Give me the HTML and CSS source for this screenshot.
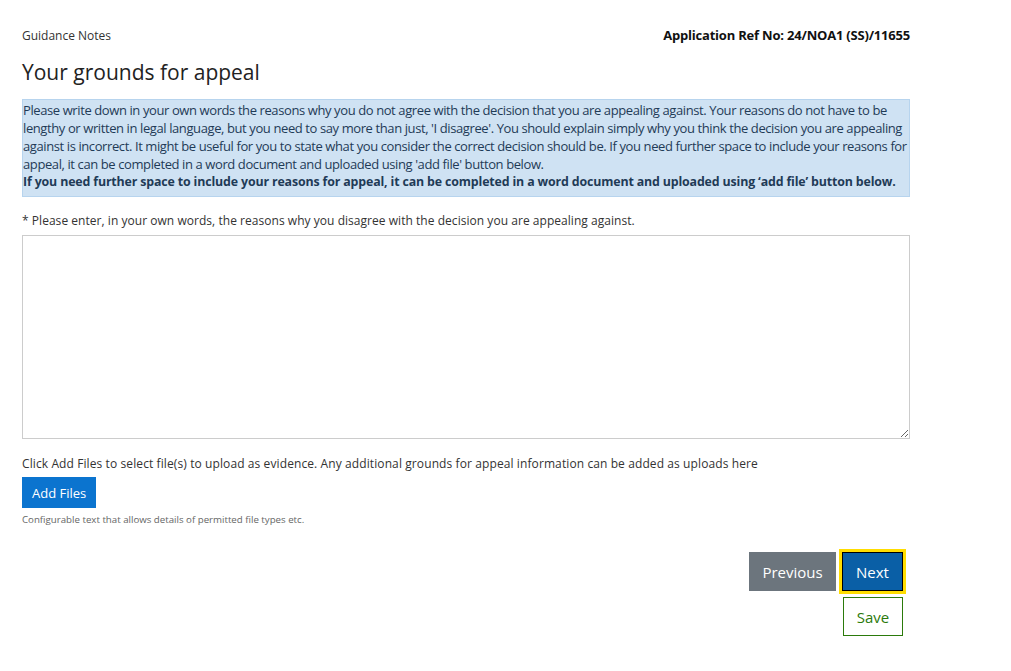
FILE: index.html
```html
<!DOCTYPE html>
<html lang="en">
<head>
  <meta charset="UTF-8">
  <meta name="viewport" content="width=device-width, initial-scale=1.0">
  <title>Your grounds for appeal</title>
  <link rel="stylesheet" href="styles.css">
</head>
<body>

  <div class="page">

    <!-- Top row -->
    <div class="top-row">
      <a href="#" class="guidance">Guidance Notes</a>
      <span class="app-ref">Application Ref No: 24/NOA1 (SS)/11655</span>
    </div>

    <h1>Your grounds for appeal</h1>

    <!-- Info box -->
    <div class="info-box">
      <p>Please write down in your own words the reasons why you do not agree with the decision that you are appealing against. Your reasons do not have to be lengthy or written in legal language, but you need to say more than just, 'I disagree'. You should explain simply why you think the decision you are appealing against is incorrect. It might be useful for you to state what you consider the correct decision should be. If you need further space to include your reasons for appeal, it can be completed in a word document and uploaded using 'add file' button below.</p>
      <p class="strong">If you need further space to include your reasons for appeal, it can be completed in a word document and uploaded using ‘add file’ button below.</p>
    </div>

    <!-- Grounds -->
    <label class="field-label" for="grounds">* Please enter, in your own words, the reasons why you disagree with the decision you are appealing against.</label>
    <textarea id="grounds" class="grounds"></textarea>

    <!-- Uploads -->
    <p class="upload-text">Click Add Files to select file(s) to upload as evidence. Any additional grounds for appeal information can be added as uploads here</p>
    <button class="btn btn-add">Add Files</button>
    <p class="hint">Configurable text that allows details of permitted file types etc.</p>

    <!-- Navigation -->
    <div class="nav-buttons">
      <div class="nav-row">
        <button class="btn btn-prev">Previous</button>
        <button class="btn btn-next">Next</button>
      </div>
      <button class="btn btn-save">Save</button>
    </div>

  </div>

</body>
</html>
```

FILE: styles.css
```css
:root {
  --color-text: #333;
  --color-heading: #222;
  --color-info-bg: #cfe2f3;
  --color-info-border: #b7d4ee;
  --color-info-text: #1f3b57;
  --color-blue: #0b74cf;
  --color-next: #0a5fa6;
  --color-grey: #6c757d;
  --color-green: #2b7a0b;
  --color-focus: #ffdd00;
}

*, *::before, *::after {
  margin: 0; padding: 0; box-sizing: border-box;
}
body {
  font-family: "Open Sans", "Noto Sans", Arial, sans-serif;
  font-size: 13px;
  color: var(--color-text);
  background: #fff;
  line-height: 18px;
}
a {
  color: inherit;
  text-decoration: none;
}
button, textarea {
  font-family: inherit;
}

.page {
  width: 888px;
  margin-left: 22px;
  padding-top: 26px;
}

.top-row {
  display: flex;
  justify-content: space-between;
  align-items: baseline;
}
.guidance {
  font-size: 12px;
}
.app-ref {
  font-weight: bold;
  color: #111;
  letter-spacing: -0.2px;
}

h1 {
  font-size: 21px;
  font-weight: normal;
  color: var(--color-heading);
  line-height: 30px;
  margin: 12px 0 12px;
}

.info-box {
  background: var(--color-info-bg);
  border: 1px solid var(--color-info-border);
  color: var(--color-info-text);
  padding: 1px 0 5px;
  letter-spacing: -0.4px;
}
.info-box .strong {
  font-weight: bold;
  font-size: 12.4px;
  letter-spacing: -0.15px;
}

.field-label {
  display: block;
  margin-top: 15px;
  font-size: 12px;
  letter-spacing: 0.04px;
}

.grounds {
  display: block;
  width: 100%;
  height: 204px;
  margin-top: 5px;
  border: 1px solid #ccc;
  resize: vertical;
  padding: 6px;
  font-size: 13px;
}

.upload-text {
  margin-top: 16px;
  font-size: 12px;
  letter-spacing: 0.1px;
}

.btn {
  border: none;
  cursor: pointer;
  font-size: 15px;
  color: #fff;
}
.btn-add {
  display: block;
  margin-top: 4px;
  background: var(--color-blue);
  font-size: 13px;
  padding: 0 10px;
  height: 31px;
}
.hint {
  margin-top: 5px;
  font-size: 9.7px;
  color: #666;
  line-height: 14px;
}

.nav-buttons {
  display: flex;
  flex-direction: column;
  align-items: flex-end;
  margin-top: 25px;
  margin-right: 7px;
  gap: 6px;
}
.nav-row {
  display: flex;
  gap: 6px;
  align-items: center;
}
.btn-prev {
  background: var(--color-grey);
  width: 87px;
  height: 39px;
}
.btn-next {
  background: var(--color-next);
  width: 61px;
  height: 39px;
  border: 1px solid #000;
  outline: 3px solid var(--color-focus);
}
.btn-save {
  background: #fff;
  color: var(--color-green);
  border: 1px solid var(--color-green);
  width: 60px;
  height: 39px;
}
```
